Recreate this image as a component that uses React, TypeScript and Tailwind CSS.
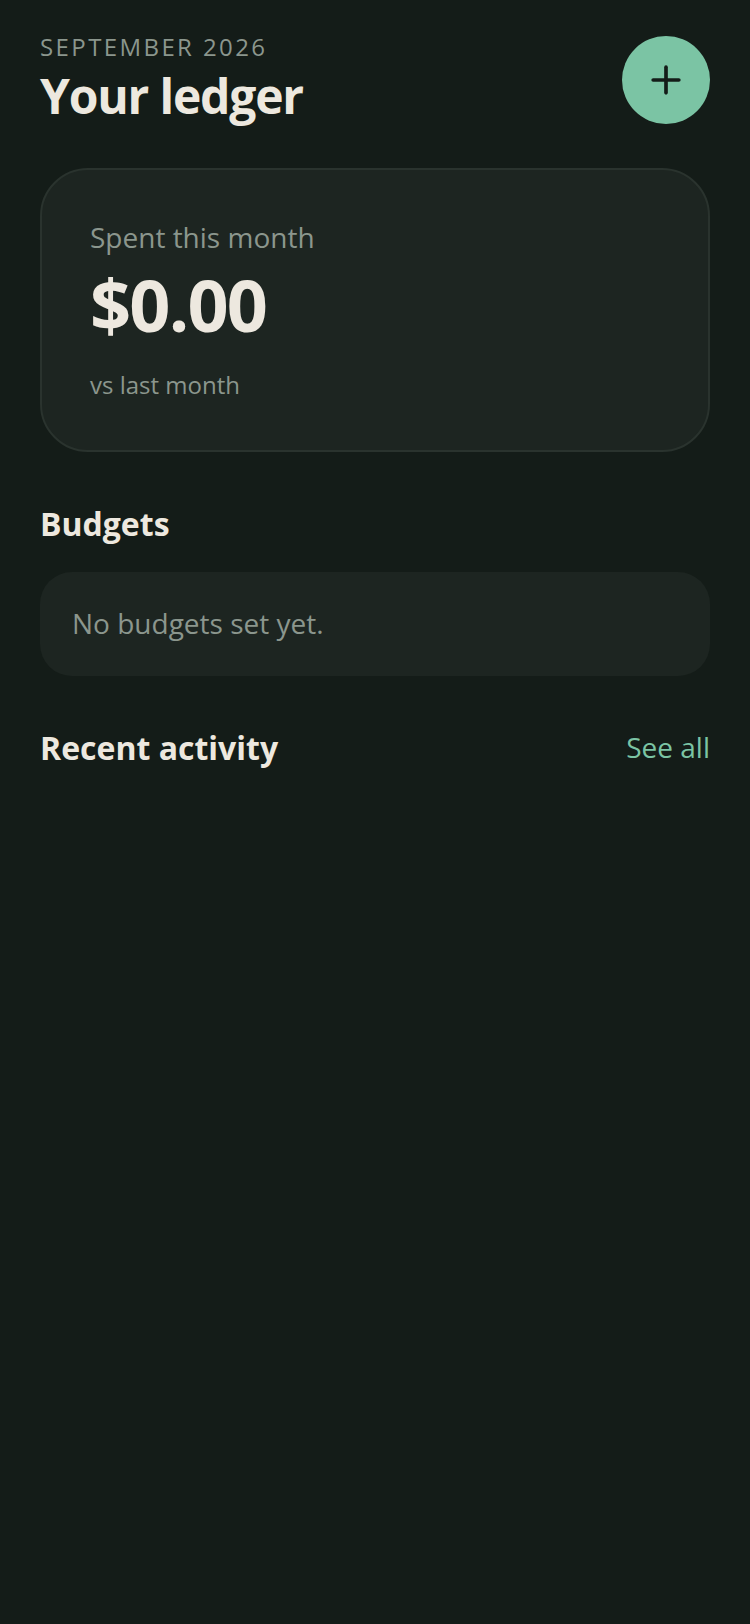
import { Plus } from "lucide-react";

export default function LedgerPage() {
    return (
        <div className="min-h-screen bg-[#141c18] px-10 pt-[31px] pb-10 font-['Open_Sans',sans-serif] text-[#ede8df]">
            <header className="flex items-center justify-between">
                <div>
                    <p className="text-2xl leading-[32px] tracking-widest text-[#8b968d] uppercase">
                        September 2026
                    </p>
                    <h1 className="text-5xl leading-[66px] font-bold tracking-tight">
                        Your ledger
                    </h1>
                </div>

                <button
                    type="button"
                    aria-label="Add expense"
                    className="flex size-[88px] items-center justify-center rounded-full bg-[#7bc4a4] text-[#141c18]"
                >
                    <Plus size={44} strokeWidth={2} />
                </button>
            </header>

            <main className="mt-[39px]">
                <section className="rounded-[48px] border-2 border-[#2a332e] bg-[#1d2521] p-12">
                    <p className="text-[28px] leading-[38px] text-[#8b968d]">
                        Spent this month
                    </p>
                    <p className="text-7xl leading-[96px] font-bold tracking-tight">
                        $0.00
                    </p>
                    <p className="mt-4 text-2xl leading-[34px] text-[#8b968d]">
                        vs last month
                    </p>
                </section>

                <section className="mt-[50px]">
                    <h2 className="text-[32px] leading-[44px] font-bold">
                        Budgets
                    </h2>
                    <div className="mt-[26px] rounded-[32px] bg-[#1d2521] px-8 pt-8 pb-[34px]">
                        <p className="text-[28px] leading-[38px] text-[#8b968d]">
                            No budgets set yet.
                        </p>
                    </div>
                </section>

                <section className="mt-[50px]">
                    <div className="flex items-start justify-between">
                        <h2 className="text-[32px] leading-[44px] font-bold">
                            Recent activity
                        </h2>
                        <a href="#activity" className="text-[28px] leading-[42px] text-[#7bc4a4]">
                            See all
                        </a>
                    </div>
                </section>
            </main>
        </div>
    );
}
